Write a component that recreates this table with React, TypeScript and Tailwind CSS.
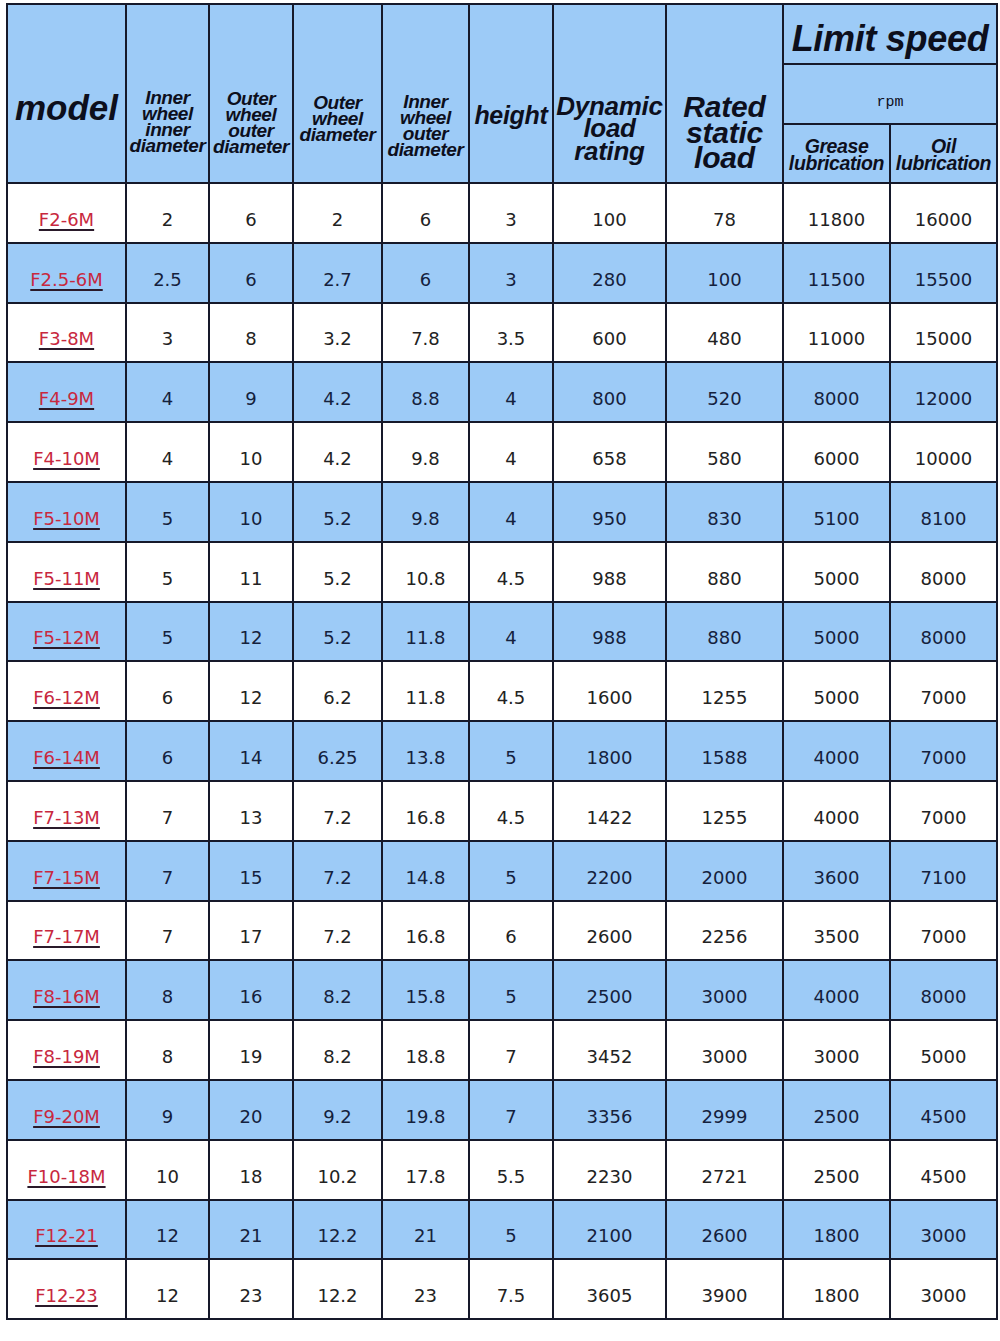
import React from "react";

const rows: string[][] = [
  ["F2-6M", "2", "6", "2", "6", "3", "100", "78", "11800", "16000"],
  ["F2.5-6M", "2.5", "6", "2.7", "6", "3", "280", "100", "11500", "15500"],
  ["F3-8M", "3", "8", "3.2", "7.8", "3.5", "600", "480", "11000", "15000"],
  ["F4-9M", "4", "9", "4.2", "8.8", "4", "800", "520", "8000", "12000"],
  ["F4-10M", "4", "10", "4.2", "9.8", "4", "658", "580", "6000", "10000"],
  ["F5-10M", "5", "10", "5.2", "9.8", "4", "950", "830", "5100", "8100"],
  ["F5-11M", "5", "11", "5.2", "10.8", "4.5", "988", "880", "5000", "8000"],
  ["F5-12M", "5", "12", "5.2", "11.8", "4", "988", "880", "5000", "8000"],
  ["F6-12M", "6", "12", "6.2", "11.8", "4.5", "1600", "1255", "5000", "7000"],
  ["F6-14M", "6", "14", "6.25", "13.8", "5", "1800", "1588", "4000", "7000"],
  ["F7-13M", "7", "13", "7.2", "16.8", "4.5", "1422", "1255", "4000", "7000"],
  ["F7-15M", "7", "15", "7.2", "14.8", "5", "2200", "2000", "3600", "7100"],
  ["F7-17M", "7", "17", "7.2", "16.8", "6", "2600", "2256", "3500", "7000"],
  ["F8-16M", "8", "16", "8.2", "15.8", "5", "2500", "3000", "4000", "8000"],
  ["F8-19M", "8", "19", "8.2", "18.8", "7", "3452", "3000", "3000", "5000"],
  ["F9-20M", "9", "20", "9.2", "19.8", "7", "3356", "2999", "2500", "4500"],
  ["F10-18M", "10", "18", "10.2", "17.8", "5.5", "2230", "2721", "2500", "4500"],
  ["F12-21", "12", "21", "12.2", "21", "5", "2100", "2600", "1800", "3000"],
  ["F12-23", "12", "23", "12.2", "23", "7.5", "3605", "3900", "1800", "3000"],
];

const th = "border-2 border-[#16192a] bg-[#9dcbf7] text-[#0d0f1c] text-center align-middle p-0";
const small = "text-[19px] font-bold italic leading-[16px] tracking-[-0.4px] whitespace-nowrap";
const td = "border-2 border-[#16192a] text-center align-middle p-0 pt-[13px] h-[59.8px]";
const num = { fontFamily: '"DejaVu Sans", Tahoma, sans-serif' };

export default function App() {
  return (
    <div className="bg-white w-[1000px] h-[1341px] pt-[3px] pl-[6px]" style={{ fontFamily: '"Liberation Sans", Arial, sans-serif' }}>
      <table className="border-collapse table-fixed w-[992px]">
        <colgroup>
          <col className="w-[119px]" />
          <col className="w-[83px]" />
          <col className="w-[84px]" />
          <col className="w-[89px]" />
          <col className="w-[87px]" />
          <col className="w-[84px]" />
          <col className="w-[113px]" />
          <col className="w-[117px]" />
          <col className="w-[107px]" />
          <col className="w-[107px]" />
        </colgroup>
        <thead>
          <tr className="h-[60px]">
            <th rowSpan={3} className={th}>
              <div className="text-[35px] font-bold italic pt-[29px]">model</div>
            </th>
            <th rowSpan={3} className={th}>
              <div className={`${small} pt-[57px]`}>Inner<br />wheel<br />inner<br />diameter</div>
            </th>
            <th rowSpan={3} className={th}>
              <div className={`${small} pt-[59px]`}>Outer<br />wheel<br />outer<br />diameter</div>
            </th>
            <th rowSpan={3} className={th}>
              <div className={`${small} pt-[51px]`}>Outer<br />wheel<br />diameter</div>
            </th>
            <th rowSpan={3} className={th}>
              <div className={`${small} pt-[65px]`}>Inner<br />wheel<br />outer<br />diameter</div>
            </th>
            <th rowSpan={3} className={th}>
              <div className="text-[25px] font-bold italic pt-[45px] tracking-[-0.3px]">height</div>
            </th>
            <th rowSpan={3} className={th}>
              <div className="text-[26px] font-bold italic leading-[22.5px] pt-[70px] tracking-[-0.3px]">Dynamic<br />load<br />rating</div>
            </th>
            <th rowSpan={3} className={th}>
              <div className="text-[30px] font-bold italic leading-[25.5px] pt-[78px] tracking-[-0.2px]">Rated<br />static<br />load</div>
            </th>
            <th colSpan={2} className={th}>
              <div className="text-[36px] font-bold italic leading-[36px] tracking-[-0.3px] pt-[10px] whitespace-nowrap">Limit speed</div>
            </th>
          </tr>
          <tr className="h-[60px]">
            <th colSpan={2} className={th}>
              <div className="text-[15px] font-normal leading-[18px] pt-[18px]" style={{ fontFamily: '"Liberation Mono", "Courier New", monospace' }}>rpm</div>
            </th>
          </tr>
          <tr className="h-[59px]">
            <th className={th}>
              <div className="text-[19.5px] font-bold italic leading-[17px] pt-[2px] tracking-[-0.4px] whitespace-nowrap">Grease<br />lubrication</div>
            </th>
            <th className={th}>
              <div className="text-[19.5px] font-bold italic leading-[17px] pt-[2px] tracking-[-0.4px] whitespace-nowrap">Oil<br />lubrication</div>
            </th>
          </tr>
        </thead>
        <tbody>
          {rows.map((r, i) => {
            const blue = i % 2 === 1;
            return (
              <tr key={r[0]} className={blue ? "bg-[#9dcbf7] text-[#14213d]" : "bg-white text-[#222222]"}>
                {r.map((c, j) => (
                  <td key={j} className={td}>
                    {j === 0 ? (
                      <span className="text-[18px] text-[#c8283e] underline decoration-[#2a1a2a] decoration-[1.5px] underline-offset-[3px]" style={num}>
                        {c}
                      </span>
                    ) : (
                      <span className="text-[18px]" style={num}>{c}</span>
                    )}
                  </td>
                ))}
              </tr>
            );
          })}
        </tbody>
      </table>
    </div>
  );
}
